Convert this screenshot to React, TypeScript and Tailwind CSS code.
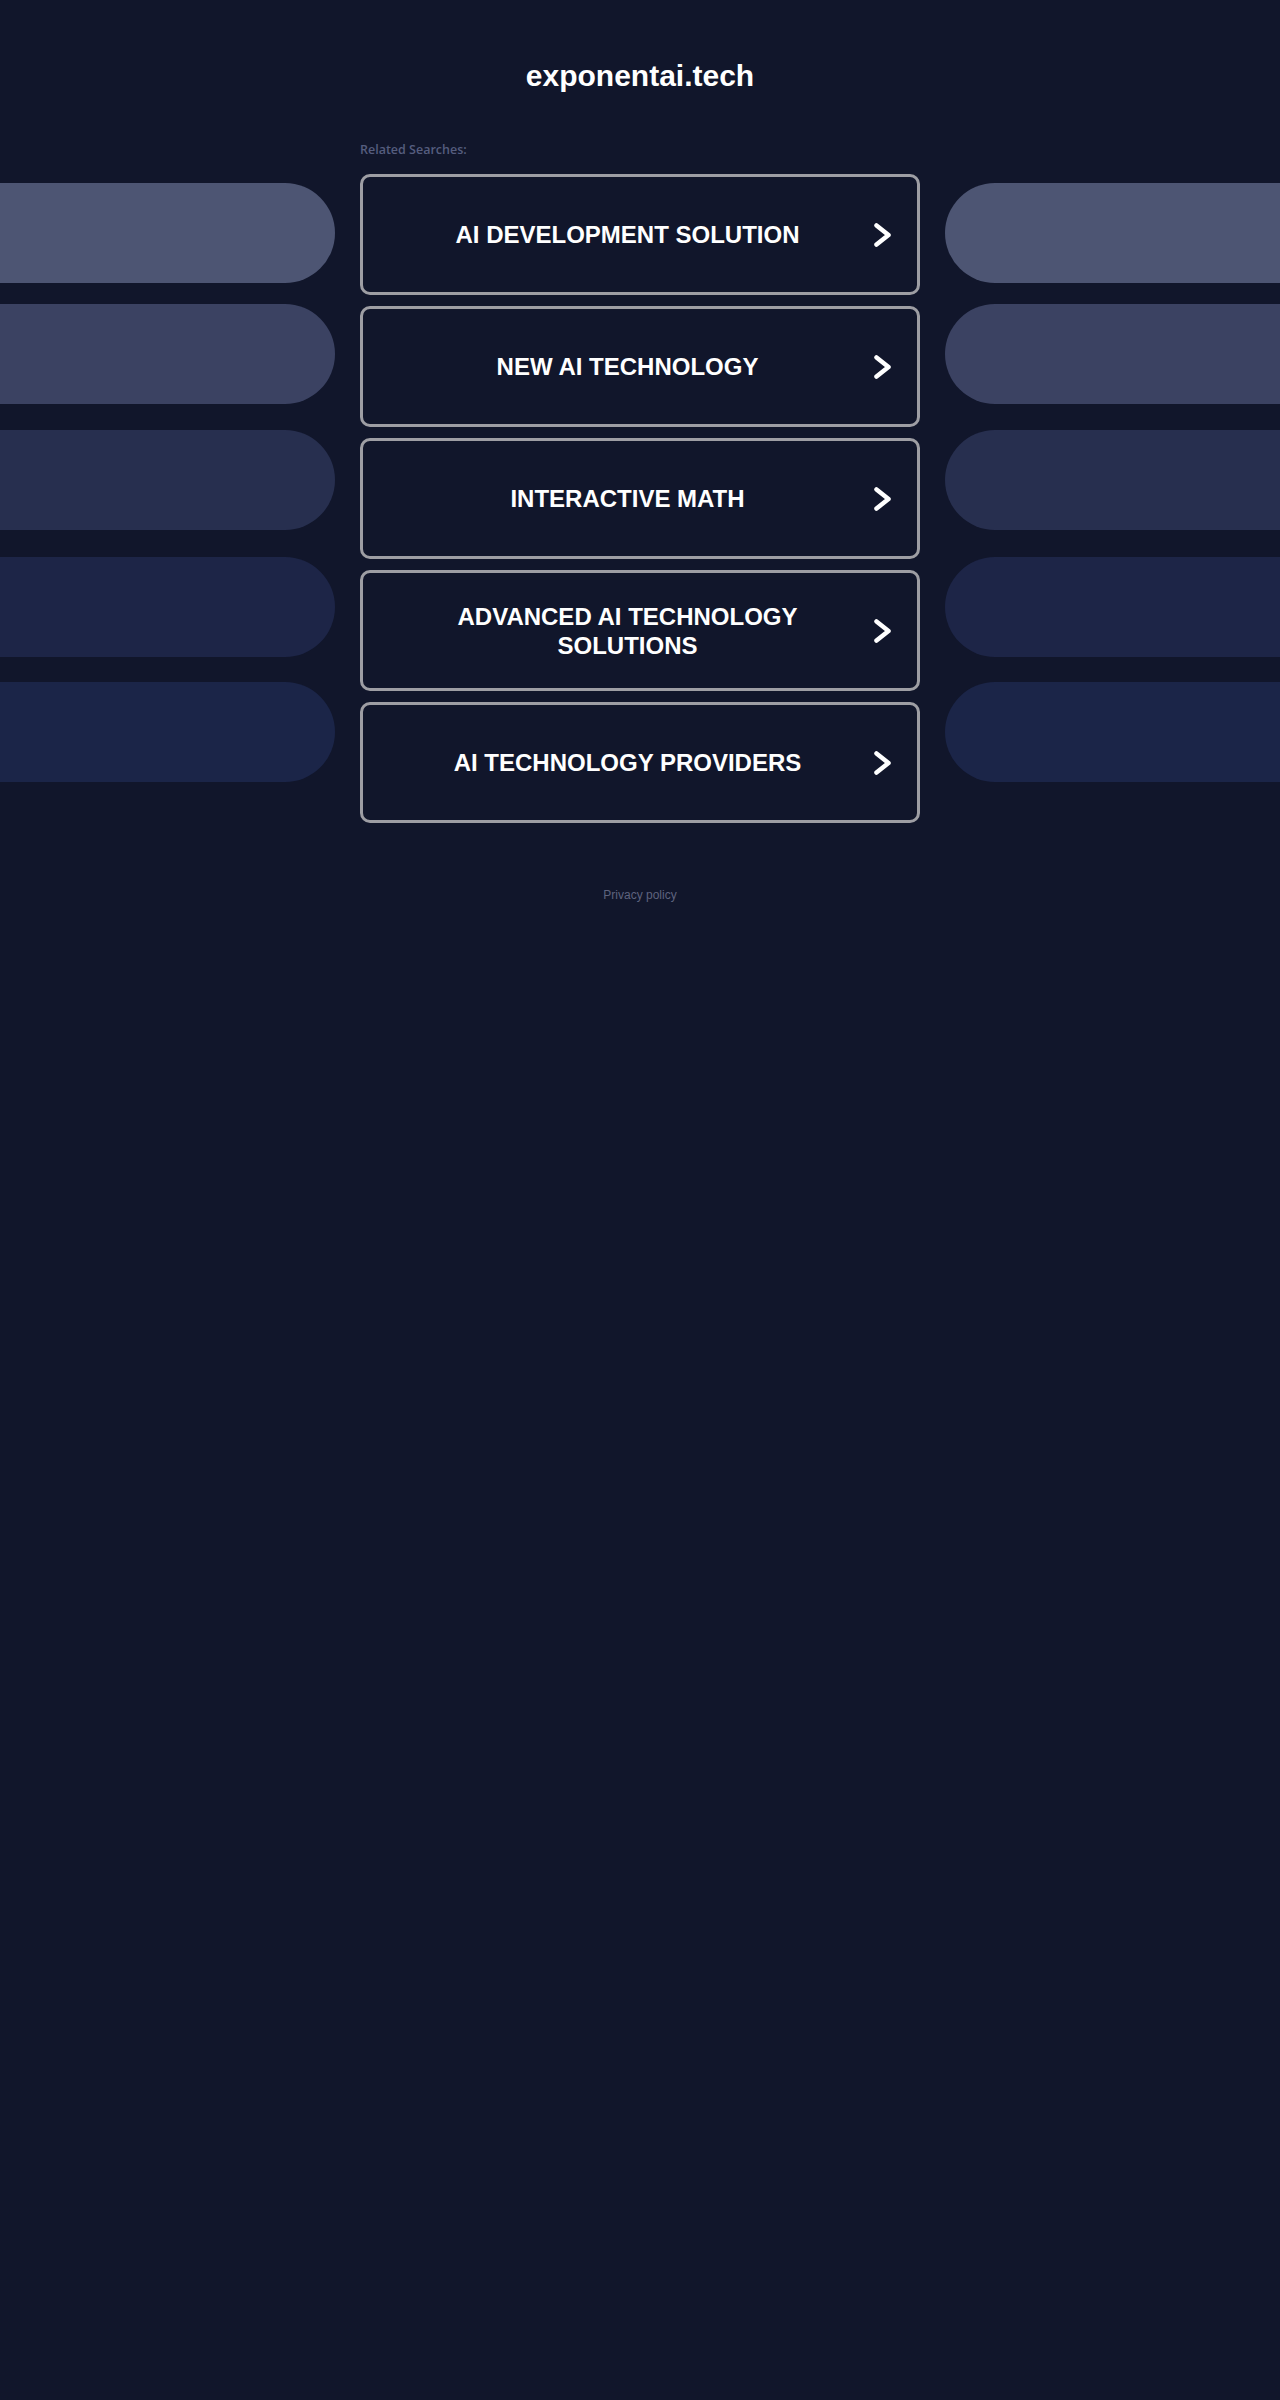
import React from 'react';

const searches = [
  'AI DEVELOPMENT SOLUTION',
  'NEW AI TECHNOLOGY',
  'INTERACTIVE MATH',
  'ADVANCED AI TECHNOLOGY SOLUTIONS',
  'AI TECHNOLOGY PROVIDERS',
];

// side pills: colour and top margin
const pills = [
  { color: 'bg-[#4d5573]', mt: 'mt-0' },
  { color: 'bg-[#3b4262]', mt: 'mt-[21px]' },
  { color: 'bg-[#272f4f]', mt: 'mt-[26px]' },
  { color: 'bg-[#1d2547]', mt: 'mt-[27px]' },
  { color: 'bg-[#1b2548]', mt: 'mt-[25px]' },
];

function Chevron() {
  return (
    <svg viewBox="0 0 17 24" className="w-[17px] h-[24px] shrink-0 ml-[11px]" fill="none">
      <path d="M2.5 2.5 L14.5 12 L2.5 21.5" stroke="white" strokeWidth="4.5" strokeLinecap="round" strokeLinejoin="round" />
    </svg>
  );
}

function PillColumn({ side }: { side: 'left' | 'right' }) {
  return (
    <div className="w-[335px] pt-[41px] flex flex-col">
      {pills.map((p, i) => (
        <div
          key={i}
          className={`h-[100px] ${p.mt} ${p.color} ${side === 'left' ? 'rounded-r-[50px]' : 'rounded-l-[50px]'}`}
        ></div>
      ))}
    </div>
  );
}

export default function App() {
  return (
    <div className="min-h-[2400px] w-full bg-[#11162b] font-['Liberation_Sans',Arial,sans-serif]">
      <h1 className="pt-[58px] text-center text-[30px] leading-[36px] font-bold text-white">
        exponentai.tech
      </h1>

      <div className="mt-[48px] flex justify-between items-start">
        <PillColumn side="left" />

        <div className="w-[560px]">
          <p className="text-[12.5px] leading-[16px] font-semibold text-[#555d7e] font-['Open_Sans',sans-serif]">
            Related Searches:
          </p>
          <div className="mt-[16px] flex flex-col gap-[11px]">
            {searches.map((s) => (
              <a
                key={s}
                href="#"
                className="h-[121px] border-[3px] border-[#9e9ea4] rounded-[10px] flex items-center pl-[29px] pr-[26px]"
              >
                <span className="flex-1 text-center text-white font-bold text-[24px] leading-[29px]">{s}</span>
                <Chevron />
              </a>
            ))}
          </div>
        </div>

        <PillColumn side="right" />
      </div>

      <div className="mt-[65px] text-center text-[12px] leading-[14px] text-[#5e637e]">
        <a href="#">Privacy policy</a>
      </div>
    </div>
  );
}
